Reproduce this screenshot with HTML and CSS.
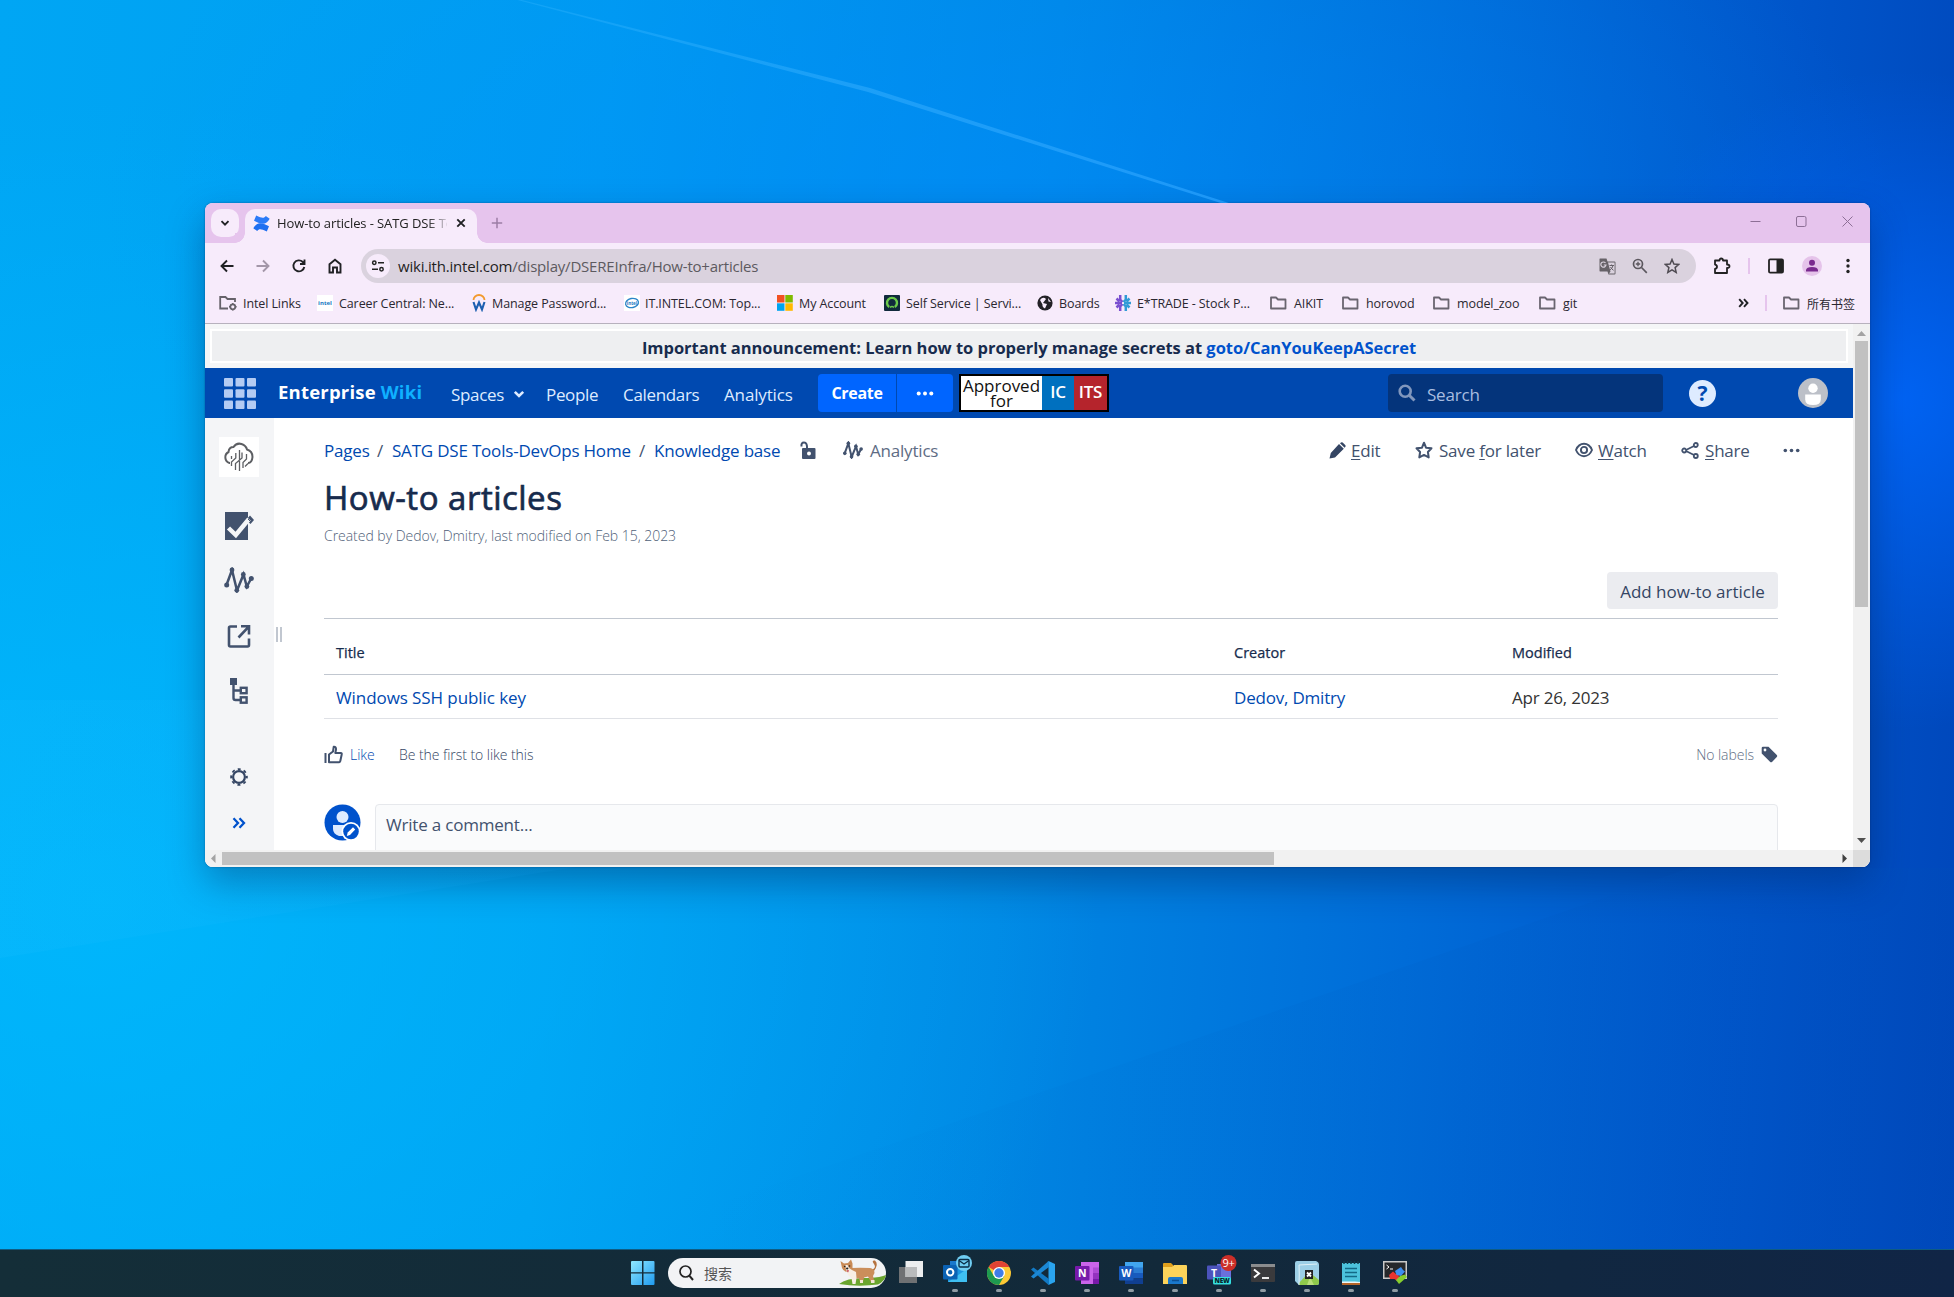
FILE: index.html
```html
<!DOCTYPE html>
<html lang="en">
<head>
<meta charset="utf-8">
<title>How-to articles - SATG DSE Tools-DevOps</title>
<link rel="stylesheet" href="styles.css">
</head>
<body>
<div class="desktop">
  <svg class="wallpaper" viewBox="0 0 1954 1249" preserveAspectRatio="none" aria-hidden="true">
    <defs>
      <linearGradient id="beam" x1="0" x2="1"><stop offset="0" stop-color="#39b8ff" stop-opacity=".3"/><stop offset=".5" stop-color="#39b0ff" stop-opacity=".5"/><stop offset="1" stop-color="#2aa2ff" stop-opacity=".7"/></linearGradient>
      <linearGradient id="shade" x1="0" x2="1"><stop offset="0" stop-color="#0060c0" stop-opacity="0"/><stop offset="1" stop-color="#0050b8" stop-opacity=".18"/></linearGradient>
      <linearGradient id="glow" x1="0" x2="1"><stop offset="0" stop-color="#20c0ff" stop-opacity=".16"/><stop offset="1" stop-color="#20a0ff" stop-opacity="0"/></linearGradient>
    </defs>
    <path d="M0 958 1000 800 1000 700 0 700Z" fill="url(#glow)"/>
    <path d="M700 1210 1690 868 1954 868 1954 1249 700 1249Z" fill="url(#shade)"/>
    <path d="M510 -2 514 -2 870 88 1232 204 1224 204 868 92Z" fill="url(#beam)"/>
  </svg>

  <main class="window">
    <header class="tabstrip">
      <button class="tab-search"><svg width="12" height="12" viewBox="0 0 12 12"><path d="M2.500 4.200 6 7.700 9.500 4.200" class="ink"/></svg></button>
      <div class="tab">
        <svg class="favicon" width="17" height="17" viewBox="0 0 17 17"><path d="M.3 13.300C4 6.800 8 7.200 16 11.200L13.800 16.500C8 13.700 6 13.500 4.200 16Z" fill="#1f6ff0"/><path d="M16.700 3.700C13 10.200 9 9.800 1 5.800L3.200.5C9 3.300 11 3.500 12.800 1Z" fill="#2b7bf8"/></svg>
        <span class="tab-title">How-to articles - SATG DSE To</span>
        <svg class="tab-close" width="10" height="10" viewBox="0 0 10 10"><path d="M1.300 1.300 8.700 8.700M8.700 1.300 1.300 8.700" class="ink"/></svg>
      </div>
      <svg class="tab-new" width="12" height="12" viewBox="0 0 12 12"><path d="M6 .8V11.200M.8 6H11.200" stroke="#9c7da5" stroke-width="1.500" fill="none"/></svg>
      <div class="win-controls">
        <svg width="11" height="11" viewBox="0 0 11 11"><path d="M.5 5.500H10.500"/></svg>
        <svg width="11" height="11" viewBox="0 0 11 11"><rect x=".5" y=".5" width="9.500" height="10" rx="1.500"/></svg>
        <svg width="11" height="11" viewBox="0 0 11 11"><path d="M.5.5 10.500 10.500M10.500.5.5 10.500"/></svg>
      </div>
    </header>

    <div class="toolbar">
      <svg width="16" height="16" viewBox="0 0 16 16" class="nav-ico ink"><path d="M14.500 8H3M8 2.500 2.500 8 8 13.500"/></svg>
      <svg width="16" height="16" viewBox="0 0 16 16" class="nav-ico ink faded"><path d="M1.500 8H13M8 2.500 13.500 8 8 13.500"/></svg>
      <svg width="16" height="16" viewBox="0 0 16 16" class="nav-ico ink"><path d="M13.300 9A5.500 5.500 0 1 1 11.800 4L13.300 5.500M13.500 1.500V6H9"/></svg>
      <svg width="16" height="16" viewBox="0 0 16 16" class="nav-ico ink"><path d="M2.500 6.300 8 1.800 13.500 6.300V14.500H10V9.500H6V14.500H2.500Z"/></svg>
      <div class="omnibox">
        <span class="site-info"><svg width="14" height="12" viewBox="0 0 14 12" fill="none" stroke="#222" stroke-width="1.500"><circle cx="3.300" cy="2.800" r="1.700"/><path d="M7 2.800H13M1 9.200H7"/><circle cx="10.500" cy="9.200" r="1.700"/></svg></span>
        <span class="url"><b>wiki.ith.intel.com</b>/display/DSEREInfra/How-to+articles</span>
        <svg width="17" height="17" viewBox="0 0 17 17"><path d="M1 .5H7.500L8.500 3.500H15.500Q16.500 3.500 16.500 4.500V15.500Q16.500 16.500 15.500 16.500H9.500L8.500 13.500H1Q.5 13.500.5 12.500V1Q.5.5 1 .5Z" fill="#666268"/><path d="M9 4.500H15.600V15.600H10L11.500 13.500Z" fill="#dad2de"/><path d="M6.500 5A2.600 2.600 0 1 0 7 7H4.800" stroke="#dad2de" stroke-width="1.200" fill="none"/><path d="M10.500 7.500H15M12.600 6.500V7.500M14 7.500Q13.500 10.500 10.800 12M11.500 9Q13 11.500 14.500 12.300" stroke="#666268" fill="none"/></svg>
        <svg width="16" height="16" viewBox="0 0 16 16" fill="none" stroke="#5b575e" stroke-width="1.700"><circle cx="6" cy="6" r="4.500"/><path d="M9.500 9.500 14.800 14.800"/><path d="M6 3.800V8.200M3.800 6H8.200" stroke-width="1.300"/></svg>
        <svg width="16" height="16" viewBox="0 0 16 16" fill="none" stroke="#4f4b52" stroke-width="1.500"><path d="M8 1.500 9.900 6 14.800 6.400 11.100 9.600 12.200 14.400 8 11.900 3.800 14.400 4.900 9.600 1.200 6.400 6.100 6Z"/></svg>
      </div>
      <svg class="t-puzzle" width="18" height="18" viewBox="0 0 18 18" fill="none" stroke="#222" stroke-width="1.800"><path d="M2 3.500H6.500Q6.500 1.500 8.200 1.500T10 3.500H14V7.500Q16.500 7.500 16.500 9.300T14 11V16H2V11.800Q4 11.500 4 9.700T2 7.600Z" stroke-linejoin="round"/></svg>
      <i class="bar t-bar1"></i>
      <svg class="t-panel" width="16" height="16" viewBox="0 0 16 16"><rect x="1" y="1.300" width="14" height="13.400" rx="1.200" fill="none" stroke="#222" stroke-width="1.800"/><path d="M8.500 1H15V15H8.500Z" fill="#222"/></svg>
      <svg class="t-user" width="20" height="20" viewBox="0 0 20 20"><circle cx="10" cy="10" r="10" fill="#e5c3ea"/><circle cx="10" cy="6.800" r="3" fill="#7a2a8f"/><path d="M4 15.500V14Q4.500 11 10 11T16 14V15.500Z" fill="#7a2a8f"/></svg>
      <svg class="t-more" width="4" height="16" viewBox="0 0 4 16" fill="#222"><circle cx="2" cy="2.500" r="1.700"/><circle cx="2" cy="8" r="1.700"/><circle cx="2" cy="13.500" r="1.700"/></svg>
    </div>

    <nav class="bookmarks">
      <svg width="18" height="16" viewBox="0 0 18 16" fill="none" stroke="#66626a" stroke-width="1.800"><path d="M9 13.500H1.200V2H6.500L8.500 4H16V7"/><circle cx="13.800" cy="11.800" r="2.500"/><path d="M13.800 8V9.300M13.800 14.300V15.600M10 11.800H11.300M16.300 11.800H17.600" stroke-width="1.500"/></svg><span>Intel Links</span>
      <svg width="16" height="16" viewBox="0 0 16 16"><path d="M0 0H16V16H0Z" fill="#fff"/><text x="8" y="10" class="mini-intel">intel</text></svg><span>Career Central: Ne...</span>
      <svg width="14" height="18" viewBox="0 0 14 18"><path d="M1.500 6A5.500 5 0 0 1 12.500 6" stroke="#f29a2e" stroke-width="1.800" fill="none"/><path d="M1.500 8 4 15.500 7 8.500 10 15.500 12.500 8" stroke="#1c5fb0" stroke-width="2.100" fill="none"/></svg><span>Manage Password...</span>
      <svg width="16" height="16" viewBox="0 0 16 16"><path d="M0 0H16V16H0Z" fill="#fff"/><ellipse cx="8" cy="8" rx="6.500" ry="4.600" fill="none" stroke="#2a86c8" stroke-width="1.300" transform="rotate(-12 8 8)"/><text x="8" y="10" class="mini-intel small">intel</text></svg><span>IT.INTEL.COM: Top...</span>
      <svg width="16" height="16" viewBox="0 0 16 16"><path d="M0 0H7.500V7.500H0Z" fill="#f25022"/><path d="M8.300 0H15.800V7.500H8.300Z" fill="#7fba00"/><path d="M0 8.300H7.500V15.800H0Z" fill="#00a4ef"/><path d="M8.300 8.300H15.800V15.800H8.300Z" fill="#ffb900"/></svg><span>My Account</span>
      <svg width="16" height="16" viewBox="0 0 16 16"><rect width="16" height="16" rx="1" fill="#10293c"/><path d="M5.200 12A5 5 0 1 1 10.800 12" stroke="#6cc94b" stroke-width="2.400" fill="none"/><path d="M6 12.500Q8 10.500 10 12.500" stroke="#6cc94b" stroke-width="1.500" fill="none"/></svg><span>Self Service | Servi...</span>
      <svg width="16" height="16" viewBox="0 0 16 16"><circle cx="8" cy="8" r="7.600" fill="#232126"/><path d="M3 5Q6 1 9 4L6 8 10 9 8 13.500Q5 12 5.500 9.500ZM11 3 14 7 11.500 6.500Z" fill="#f8ecfb"/></svg><span>Boards</span>
      <svg width="16" height="16" viewBox="0 0 16 16" fill="none" stroke-width="2.500"><path d="M5.200 0V4.500L7.500 7M0 8H7M5.200 16V11.500L7.500 9M1.500 3.500 4.500 6.500M1.500 12.500 4.500 9.500" stroke="#7a4fd0"/><path d="M10.800 0V4.500L8.500 7M16 8H9M10.800 16V11.500L8.500 9M14.500 3.500 11.500 6.500M14.500 12.500 11.500 9.500" stroke="#2f9bd6"/></svg><span>E*TRADE - Stock P...</span>
      <svg width="17" height="14" viewBox="0 0 17 14" class="folder"><path d="M1 1.500H6L8 3.500H15.500V12.500H1Z"/></svg><span>AIKIT</span>
      <svg width="17" height="14" viewBox="0 0 17 14" class="folder"><path d="M1 1.500H6L8 3.500H15.500V12.500H1Z"/></svg><span>horovod</span>
      <svg width="17" height="14" viewBox="0 0 17 14" class="folder"><path d="M1 1.500H6L8 3.500H15.500V12.500H1Z"/></svg><span>model_zoo</span>
      <svg width="17" height="14" viewBox="0 0 17 14" class="folder"><path d="M1 1.500H6L8 3.500H15.500V12.500H1Z"/></svg><span>git</span>
      <svg width="11" height="10" viewBox="0 0 11 10" class="ink"><path d="M1.200 1.200 4.700 5 1.200 8.800M6 1.200 9.500 5 6 8.800"/></svg>
      <i class="bar"></i>
      <svg width="17" height="14" viewBox="0 0 17 14" class="folder"><path d="M1 1.500H6L8 3.500H15.500V12.500H1Z"/></svg><span class="zh">所有书签</span>
    </nav>

    <div class="viewport">
      <div class="page">
        <div class="announce-wrap"><div class="announce">Important announcement: Learn how to properly manage secrets at <a>goto/CanYouKeepASecret</a></div></div>

        <div class="app-header">
          <svg class="h-grid" width="32" height="31" viewBox="0 0 32 31" fill="#b3cbf3"><rect width="9" height="8.500" rx="1"/><rect x="11.500" width="9" height="8.500" rx="1"/><rect x="23" width="9" height="8.500" rx="1"/><rect y="11.200" width="9" height="8.500" rx="1"/><rect x="11.500" y="11.200" width="9" height="8.500" rx="1"/><rect x="23" y="11.200" width="9" height="8.500" rx="1"/><rect y="22.400" width="9" height="8.500" rx="1"/><rect x="11.500" y="22.400" width="9" height="8.500" rx="1"/><rect x="23" y="22.400" width="9" height="8.500" rx="1"/></svg>
          <span class="brand">Enterprise <em>Wiki</em></span>
          <span class="menu spaces"><span>Spaces</span> <svg width="12" height="9" viewBox="0 0 12 9"><path d="M1.800 1.800 6 6 10.200 1.800" stroke="#deebff" stroke-width="2.600" fill="none"/></svg></span>
          <span class="menu people">People</span>
          <span class="menu cal">Calendars</span>
          <span class="menu ana">Analytics</span>
          <div class="create"><span class="create-main">Create</span><span class="create-more"><svg width="18" height="5" viewBox="0 0 18 5" fill="#fff"><circle cx="2.700" cy="2.500" r="2"/><circle cx="9" cy="2.500" r="2"/><circle cx="15.300" cy="2.500" r="2"/></svg></span></div>
          <div class="approved"><span class="ap-text"><span>Approved</span><span>for</span></span><span class="ap-ic">IC</span><span class="ap-its">ITS</span></div>
          <div class="search"><svg width="18" height="18" viewBox="0 0 18 18" fill="none" stroke="#8197bd"><circle cx="7.200" cy="7.200" r="5.500" stroke-width="2.600"/><path d="M11.200 11.200 16.500 16.500" stroke-width="3"/></svg><span>Search</span></div>
          <span class="help">?</span>
          <svg class="me" width="30" height="30" viewBox="0 0 30 30"><circle cx="15" cy="15" r="15" fill="#bcc0c8"/><circle cx="15" cy="10.300" r="4.700" fill="#fff"/><path d="M7.200 16.500H22.800V21.500Q22.800 27 15 27T7.200 21.500Z" fill="#fff"/></svg>
        </div>

        <div class="columns">
          <aside class="sidebar">
            <span class="space-logo"><svg width="34" height="34" viewBox="0 0 34 34" fill="none" stroke="#5d5f63"><path d="M8 23H7.500A6 6 0 0 1 6.500 12Q7 7 11.500 7 14.500 2.500 19.500 4 24 5.500 25 9.500 30.500 11 30.500 17 30 23 26 23" stroke-width="2"/><path d="M17.500 10V31M13.800 13V18L9.500 22V26M13.500 30V23.500L20 18V12.500M21 28V22.500L24.500 19V14M23 26.500 26 23.500M9.500 19V16" stroke-width="1.300"/></svg></span>
            <svg class="s1" width="30" height="29" viewBox="0 0 30 29"><path d="M1 1H24V29H1Z" fill="#42526e"/><path d="M26 4.500 30 9 26.500 13 22 9Z" fill="#42526e"/><path d="M4.500 17 11.800 24 25 8" stroke="#f4f5f7" stroke-width="4.500" fill="none"/><path d="M24 8 27 11" stroke="#42526e" stroke-width="1"/></svg>
            <svg class="s2" width="30" height="26" viewBox="0 0 30 26"><path d="M2.500 18 8 3 13 23.500 19.500 7.500 22.800 19.500 27.500 11" stroke="#42526e" stroke-width="2.500" fill="none"/><g fill="#42526e"><circle cx="2.700" cy="18" r="2.500"/><circle cx="8" cy="3" r="2.400"/><circle cx="12.800" cy="23.300" r="2.400"/><circle cx="19.300" cy="7.500" r="2.400"/><circle cx="22.900" cy="19.500" r="2.400"/><circle cx="27.300" cy="11.500" r="2.500"/></g></svg>
            <svg class="s3" width="24" height="24" viewBox="0 0 24 24" fill="none" stroke="#42526e" stroke-width="2.600"><path d="M10 2.500H3.500Q2 2.500 2 4V21Q2 22.500 3.500 22.500H20.500Q22 22.500 22 21V14.500"/><path d="M14 2.300H22V10.500M22 2.300 11.500 13.500"/></svg>
            <svg class="s4" width="20" height="27" viewBox="0 0 20 27" fill="none" stroke="#42526e" stroke-width="2.400"><path d="M1 1H8V8H1Z" fill="#42526e" stroke="none"/><path d="M4.500 8V21Q4.500 23 6.500 23H11M4.500 13.500H11"/><rect x="11.800" y="10.800" width="5.800" height="5.400"/><rect x="11.800" y="20.300" width="5.800" height="5.400"/></svg>
            <svg class="s5" width="18" height="18" viewBox="0 0 18 18" fill="none" stroke="#344563"><circle cx="9" cy="9" r="5.900" stroke-width="2.200"/><circle cx="9" cy="9" r="7.900" stroke-width="1.800" stroke-dasharray="3 3.200" stroke-dashoffset="1.500"/></svg>
            <svg class="s6" width="14" height="12" viewBox="0 0 14 12"><path d="M1.500 1.200 6 6 1.500 10.800M7.500 1.200 12 6 7.500 10.800" stroke="#0052cc" stroke-width="2.300" fill="none"/></svg>
          </aside>
          <div class="handle"><i></i><i></i></div>

          <section class="content">
            <div class="crumb-row">
              <div class="crumbs">
                <a>Pages</a><span>/</span><a>SATG DSE Tools-DevOps Home</a><span>/</span><a>Knowledge base</a>
                <svg width="17" height="19" viewBox="0 0 17 19"><path d="M1.500 5.500Q1 1.500 4 1.500 7.500 1.500 7 8" stroke="#42526e" stroke-width="2" fill="none"/><rect x="2" y="7" width="13.500" height="11" rx="1" fill="#42526e"/><circle cx="9" cy="12.500" r="2" fill="#fff"/></svg>
                <svg width="20" height="18" viewBox="0 0 30 26"><path d="M2.500 18 8 3 13 23.500 19.500 7.500 22.800 19.500 27.500 11" stroke="#42526e" stroke-width="3" fill="none"/><g fill="#42526e"><circle cx="2.700" cy="18" r="2.700"/><circle cx="8" cy="3" r="2.700"/><circle cx="12.800" cy="23" r="2.700"/><circle cx="19.300" cy="7.500" r="2.700"/><circle cx="22.900" cy="19.500" r="2.700"/><circle cx="27.200" cy="11.500" r="2.700"/></g></svg>
                <span class="grey">Analytics</span>
              </div>
              <div class="actions">
                <svg width="17" height="17" viewBox="0 0 17 17" fill="#344563"><path d="M.5 16.500 1.800 11 10 2 14.800 6.800 6 15.500ZM11 1.200 12 .4Q13 0 13.700.6L16.400 3.200Q17 4 16.400 4.700L15.600 5.700Z"/></svg><span><u>E</u>dit</span>
                <svg width="18" height="18" viewBox="0 0 18 18" fill="none" stroke="#42526e" stroke-width="2" stroke-linejoin="round"><path d="M9 1.700 11 6.700 16.500 7.200 12.900 11 13.700 16.400 9 13.900 4.300 16.400 5.100 11 1.500 7.200 7 6.700Z"/></svg><span>Save <u>f</u>or later</span>
                <svg width="18" height="16" viewBox="0 0 18 16" fill="none" stroke="#42526e" stroke-width="1.900"><path d="M1 8Q3.500 1.800 9 1.800T17 8Q14.500 14.200 9 14.200T1 8Z"/><circle cx="9" cy="8" r="3.100"/></svg><span><u>W</u>atch</span>
                <svg width="18" height="17" viewBox="0 0 18 17" fill="none" stroke="#42526e" stroke-width="1.800"><path d="M4 8.500 14 3.500M4 8.500 14 13.500"/><g fill="#fff"><circle cx="3.200" cy="8.500" r="2"/><circle cx="14.800" cy="3" r="2"/><circle cx="14.800" cy="14" r="2"/></g></svg><span><u>S</u>hare</span>
                <svg width="17" height="5" viewBox="0 0 17 5" fill="#42526e"><circle cx="2.300" cy="2.500" r="1.800"/><circle cx="8.500" cy="2.500" r="1.800"/><circle cx="14.700" cy="2.500" r="1.800"/></svg>
              </div>
            </div>
            <h1>How-to articles</h1>
            <p class="meta">Created by Dedov, Dmitry, last modified on Feb 15, 2023</p>
            <div class="button-row"><span class="button">Add how-to article</span></div>
            <div class="table">
              <div class="tr th"><span>Title</span><span>Creator</span><span>Modified</span></div>
              <div class="tr"><a class="article">Windows SSH public key</a><a>Dedov, Dmitry</a><span>Apr 26, 2023</span></div>
            </div>
            <div class="like-row">
              <svg width="19" height="19" viewBox="0 0 19 19" fill="none" stroke="#42526e" stroke-width="2"><path d="M1.500 8V18"/><path d="M5 17.300V9.500L9 6.500 9.700 1.800Q12.300 1.500 12 4.500L11.300 8H16.800Q18 8 17.700 9.500L16.300 16Q16 17.300 14.800 17.300Z" stroke-linejoin="round"/></svg>
              <a class="like">Like</a><span>Be the first to like this</span>
              <span class="nolabels">No labels</span>
              <svg width="17" height="17" viewBox="0 0 17 17"><path d="M.7 2Q.7.7 2 .7H7.500L15.800 9Q16.800 10 15.800 11L11 15.900Q10 16.800 9 15.800L.7 7.500Z" fill="#42526e"/><circle cx="4" cy="4" r="1.400" fill="#fff"/></svg>
            </div>
            <div class="comment">
              <svg width="37" height="37" viewBox="0 0 37 37"><circle cx="18.500" cy="18.500" r="18" fill="#0052cc"/><circle cx="18.500" cy="13" r="6" fill="#deebff"/><path d="M9 21H27V32H15Q9 30 9 25Z" fill="#deebff"/><circle cx="27" cy="27.500" r="9.500" fill="#fff"/><circle cx="27" cy="27.500" r="7.800" fill="#0052cc"/><path d="M22.800 32 23.700 28.500 29 23.300 31.200 25.500 26 31Z" fill="#fff"/></svg>
              <div class="comment-box">Write a comment...</div>
            </div>
          </section>
        </div>
      </div>
      <div class="vbar"><svg width="9" height="6" viewBox="0 0 9 6"><path d="M0 5 4.500 0 9 5Z" fill="#a3a3a3"/></svg><i></i><svg width="9" height="6" viewBox="0 0 9 6"><path d="M0 0H9L4.500 5Z" fill="#505050"/></svg></div>
      <div class="hbar"><svg width="5" height="9" viewBox="0 0 5 9"><path d="M4.500 0V9L0 4.500Z" fill="#a3a3a3"/></svg><i></i><svg width="5" height="9" viewBox="0 0 5 9"><path d="M.5 0V9L5 4.500Z" fill="#404040"/></svg></div>
      <div class="corner"></div>
    </div>
  </main>

  <footer class="taskbar">
    <svg class="app" width="24" height="24" viewBox="0 0 24 24"><defs><linearGradient id="win" x2="1" y2="1"><stop stop-color="#8fe8ff"/><stop offset="1" stop-color="#1f9bf0"/></linearGradient></defs><path d="M0 1Q0 0 1 0H11V11.300H0ZM12.500 0H22.500Q23.500 0 23.500 1V11.300H12.500ZM0 12.500H11V24H1Q0 24 0 23ZM12.500 12.500H23.500V23Q23.500 24 22.500 24H12.500Z" fill="url(#win)"/></svg>
    <div class="pill">
      <svg width="15" height="16" viewBox="0 0 15 16" fill="none" stroke="#222" stroke-width="1.700"><circle cx="6.500" cy="6.500" r="5.500"/><path d="M10.500 10.800 14 15" stroke-width="2"/></svg>
      <span class="zh">搜索</span>
      <svg width="48" height="28" viewBox="0 0 48 28"><path d="M1 25Q8 19 26 19 38 19 45 17L48 16Q47 22 40 25.500 20 28 1 25Z" fill="#6aa52e"/><path d="M33 11Q39 9 36 5 33 1 37 1.500 41 5 36 12Z" fill="#b5733f"/><path d="M13 9Q22 8.500 32 9 36.500 10 36.500 14L35 17 36.500 23H33L30 17.500 26 18.500 25 23H22L21 19 17 20Q11 18 11 13Z" fill="#cb8e5b"/><path d="M2.500 2 6 4.500 10 4 13 .5 14.500 4.500 14.500 9Q15 13 10.500 13.500 5 12.500 4 9Z" fill="#c98a55"/><path d="M7.500 6 9.500 6 11 9 14 11 18 13 18.500 19 17.500 25H14.500L13.500 19 10 16 8 11Z" fill="#f8eee4"/><path d="M33 21H36.500V24H33ZM22 21H25V24H22Z" fill="#f3e4d4"/><circle cx="6.700" cy="7.500" r=".8" fill="#222"/><circle cx="11.500" cy="7" r=".8" fill="#222"/><ellipse cx="9.200" cy="9.500" rx="1.200" ry=".9" fill="#222"/><path d="M8.300 11.300H11L10 13.500Z" fill="#c0394a"/></svg>
    </div>
    <svg class="app" width="24" height="24" viewBox="0 0 24 24"><path d="M0 6H18V22H0Z" fill="#6f7173"/><path d="M6.500 0H24V16H6.500Z" fill="#eceeef"/><path d="M6.500 6H18V16H6.500Z" fill="#b9bbbc"/></svg>
    <span class="app run"><svg width="30" height="30" viewBox="0 0 30 30"><path d="M7 6H19V16H7Z" fill="#1a78cc"/><path d="M5 13 24 14V27H5Z" fill="#1e96e0"/><path d="M5 27 24 14V27Z" fill="#3fc0f2"/><rect y="10" width="14.500" height="14.500" rx="1" fill="#0b62b4"/><circle cx="7.200" cy="17.200" r="3.200" fill="none" stroke="#fff" stroke-width="2"/><circle cx="21" cy="8" r="8" fill="#6fcdf2"/><rect x="16" y="4.500" width="10" height="7.500" rx="1" fill="none" stroke="#0a2d46" stroke-width="1.400"/><path d="M16 5.500 21 9 26 5.500" fill="none" stroke="#0a2d46" stroke-width="1.400"/></svg></span>
    <span class="app run"><svg width="24" height="24" viewBox="0 0 24 24"><circle cx="12" cy="12" r="12" fill="#fcc934"/><path d="M12 12 1.600 6A12 12 0 0 1 22.400 6H12Z" fill="#e04334"/><path d="M1.600 6A12 12 0 0 0 12 24L17.200 15 12 12 6.800 15Z" fill="#1e9a50"/><circle cx="12" cy="12" r="6" fill="#fff"/><circle cx="12" cy="12" r="4.700" fill="#3f7de8"/></svg></span>
    <span class="app run"><svg width="24" height="24" viewBox="0 0 24 24"><path d="M17.500 0 24 3V21L17.500 24Z" fill="#2aa4ef"/><path d="M0 8.500 2.500 6.500 18 18V24L17 23.500Z" fill="#1279c4"/><path d="M0 15.500 2.500 17.500 18 6V0L17 .5Z" fill="#1b87d4"/></svg></span>
    <span class="app run"><svg width="24" height="24" viewBox="0 0 24 24"><path d="M6 1H24V23H6Z" fill="#ca64ea"/><path d="M18 6.500H24V12H18Z" fill="#ae4bd5"/><path d="M18 12H24V17.500H18Z" fill="#9332bf"/><path d="M18 17.500H24V23H18Z" fill="#7719aa"/><rect y="5" width="14.500" height="14.500" rx="1" fill="#7719aa"/><text x="7.200" y="16.200" class="office">N</text></svg></span>
    <span class="app run"><svg width="24" height="24" viewBox="0 0 24 24"><path d="M6 1H24V7H6Z" fill="#41a5ee"/><path d="M6 6.500H24V12H6Z" fill="#2b7cd3"/><path d="M6 12H24V17.500H6Z" fill="#185abd"/><path d="M6 17.500H24V23H6Z" fill="#103f91"/><rect y="5" width="14.500" height="14.500" rx="1" fill="#185abd"/><text x="7.200" y="16.200" class="office">W</text></svg></span>
    <span class="app run"><svg width="24" height="24" viewBox="0 0 24 24"><path d="M0 3Q0 2 1 2H8L10 4V9H0Z" fill="#e0a01c"/><path d="M0 6H9L11 4H23Q24 4 24 5V23H0Z" fill="#fcd35a"/><path d="M5 23V18Q5 16 7 16H18Q20 16 20 18V23Z" fill="#1a78cc"/><path d="M9 19.500H16" stroke="#0b4f94" stroke-width="1.500"/></svg></span>
    <span class="app run"><svg width="30" height="30" viewBox="0 0 30 30"><path d="M10 9H24V24H10Z" fill="#6a70dd"/><rect y="10.500" width="14" height="14" rx="1" fill="#4b53bc"/><text x="7" y="21.500" class="office">T</text><rect x="6" y="22" width="18" height="7.500" rx="1.500" fill="#35dfe0"/><text x="15" y="28.200" class="new">NEW</text><circle cx="21.500" cy="8" r="8" fill="#cc2f29"/><text x="21.500" y="11.800" class="badge">9+</text></svg></span>
    <span class="app run"><svg width="24" height="24" viewBox="0 0 24 24"><rect y="3" width="24" height="18" rx="1" fill="#3a3a3c"/><path d="M0 3H24V6H0Z" fill="#8a8c8e"/><path d="M3 8.500 8 12.500 3 16.500" stroke="#fff" stroke-width="2" fill="none"/><path d="M11 17H18" stroke="#fff" stroke-width="1.800"/></svg></span>
    <span class="app run"><svg width="24" height="24" viewBox="0 0 24 24"><path d="M0 2Q0 0 2 0H21Q24 1 24 4V22Q24 24 22 24H4L0 20Z" fill="#9ccfe6"/><path d="M4 24V22L14 11 24 19V22Q24 24 22 24Z" fill="#8fc94c"/><path d="M4 24Q4.500 12 4 4L22 3" stroke="#e1f1f7" stroke-width="1" fill="none"/><path d="M12 24 15 16 19 24Z" fill="#b8de7a"/><path d="M10 9H18V18H10Z" fill="#222"/><path d="M12 11.500 16 15.500M16 11.500 12 15.500" stroke="#fff" stroke-width="1.800"/></svg></span>
    <span class="app run mid"><svg width="20" height="24" viewBox="0 0 20 24"><path d="M1 2H19V21H1Z" fill="#4cc3dc"/><path d="M1 21H19V24H1Z" fill="#b5652a"/><path d="M1 20.500H14L19 21V22H1Z" fill="#e9f5f8"/><path d="M3 0V3M6.500 0V3M10 0V3M13.500 0V3M17 0V3" stroke="#0f3a4a" stroke-width="1.500"/><path d="M4 7.500H16M4 11.500H16M4 15.500H16" stroke="#136a86" stroke-width="1.600"/></svg></span>
    <span class="app run"><svg width="24" height="24" viewBox="0 0 24 24"><path d="M0 0H24V18H0Z" fill="#c9c9c9"/><path d="M1.500 1.500H22.500V16.500H1.500Z" fill="#26282b"/><path d="M3.500 4 6 6 3.500 8M7 8H10" stroke="#fff" fill="none"/><path d="M6 14 10 10.500 13 13 15 12.500 16.500 18 14 20 11.500 18 7 18Z" fill="#e8342f"/><path d="M12 10 18 6 20 9 22 10.500 18 15 13.500 14Z" fill="#3d8ff0"/><path d="M13 19 17 15 22 13.500 24 16 16 23Z" fill="#86cf2e"/></svg></span>
  </footer>
</div>
</body>
</html>
```
FILE: styles.css
```css
* { box-sizing: border-box; }
html, body { margin: 0; height: 100%; }
body { font-family: "Open Sans", "Noto Sans", "Noto Sans CJK SC", sans-serif; font-size: 17px; letter-spacing: -.2px; color: #172b4d; overflow: hidden; }
svg { display: block; flex: none; }
a { color: #0049b0; text-decoration: none; }
button { border: 0; padding: 0; }
.zh { font-family: "Noto Sans CJK SC", sans-serif; }

.desktop {
  position: relative; display: flex; flex-direction: column; width: 1954px; height: 1297px;
  background:
    radial-gradient(ellipse 330px 330px at 1900px 400px, rgba(0,104,255,.8), rgba(0,100,250,0)),
    radial-gradient(ellipse 900px 420px at 1000px 200px, rgba(0,140,255,.5), rgba(0,140,255,0)),
    radial-gradient(ellipse 1000px 800px at 100px 900px, rgba(0,190,255,.7), rgba(0,190,255,0)),
    linear-gradient(94deg, #00a6f4 0%, #009cf0 30%, #0088e4 52%, #006cd8 72%, #0055ca 88%, #0046ba 100%);
}
.desktop::before { content: ""; position: absolute; left: 205px; top: 203px; width: 1665px; height: 664px; border-radius: 8px; box-shadow: 0 0 2px rgba(0,30,80,.5), 0 16px 36px rgba(0,30,80,.38); }
.wallpaper { position: absolute; left: 0; top: 0; width: 1954px; height: 1249px; }

.window {
  position: relative; display: flex; flex-direction: column; width: 1665px; height: 664px; margin: 203px 0 0 205px;
  background: #f7ebfb; border-radius: 8px; overflow: hidden;
}
.ink { fill: none; stroke: #202124; stroke-width: 1.9; }
.faded { stroke: #a396a8; }

.tabstrip { display: flex; height: 40px; background: #e6c4ed; }
.tab-search { display: flex; align-items: center; justify-content: center; width: 28px; height: 28px; margin: 6px 6px 0; border-radius: 10px; background: #f7ebfb; }
.tab { position: relative; display: flex; align-items: center; width: 232px; height: 34px; margin-top: 6px; padding: 0 11px 6px 8px; border-radius: 10px 10px 0 0; background: #f7ebfb; }
.tab::before, .tab::after { content: ""; position: absolute; bottom: 0; width: 10px; height: 10px; }
.tab::before { left: -10px; background: radial-gradient(circle at 0 0, #e6c4ed 9.5px, #f7ebfb 10px); }
.tab::after { right: -10px; background: radial-gradient(circle at 100% 0, #e6c4ed 9.5px, #f7ebfb 10px); }
.tab-title { width: 170px; margin-left: 7px; font-size: 13px; letter-spacing: -.1px; color: #222; white-space: nowrap; overflow: hidden; -webkit-mask-image: linear-gradient(90deg, #000 150px, transparent 174px); }
.tab-close { margin-left: auto; }
.tab-new { margin: 14px 0 0 14px; }
.win-controls { display: flex; gap: 35px; margin: 13px 17px 0 auto; }
.win-controls svg { fill: none; stroke: #8d6f96; stroke-width: 1; }

.toolbar { display: flex; align-items: center; height: 46px; padding-left: 14px; }
.nav-ico { margin-right: 20px; }
.omnibox { display: flex; align-items: center; width: 1335px; height: 34px; margin-left: -2px; padding: 0 16px 0 5px; border-radius: 17px; background: #dad2de; }
.omnibox > svg { margin-left: 16px; }
.site-info { display: flex; align-items: center; justify-content: center; width: 24px; height: 24px; border-radius: 50%; background: #f7ebfb; }
.url { flex: 1; margin-left: 8px; padding-bottom: 1px; font-size: 15px; color: #5d5a60; white-space: nowrap; }
.url b { font-weight: 400; color: #1f1f1f; }
.bar { width: 2px; height: 16px; background: #e6c4ed; }
.t-puzzle { margin-left: 17px; }
.t-bar1 { margin-left: 17px; }
.t-panel { margin-left: 18px; }
.t-user { margin-left: 18px; }
.t-more { margin-left: 24px; }

.bookmarks {
  display: grid; align-items: center; height: 34px; padding: 0 0 6px 14px; font-size: 12.5px; letter-spacing: -.1px; color: #2a2730; white-space: nowrap;
  grid-template-columns: 24px 74px 22px 133px 20px 132px 21px 132px 22px 85px 22px 131px 22px 56px 22px 133px 24px 48px 24px 67px 24px 82px 24px 175px 27px 18px 24px 56px;
}
.bookmarks .zh { font-size: 12px; letter-spacing: 0; }
.folder { fill: none; stroke: #6a6570; stroke-width: 1.8; stroke-linejoin: round; }
.mini-intel { font: bold 6px "Open Sans", sans-serif; fill: #1a78c2; text-anchor: middle; letter-spacing: 0; }
.mini-intel.small { font-size: 4.5px; }

.viewport { display: grid; grid-template-columns: 1648px 17px; grid-template-rows: 526px 17px; height: 544px; border-top: 1px solid #b7b1bd; background: #f4f5f7; }
.page { overflow: hidden; background: #fff; }
.announce-wrap { height: 44px; padding: 5px; background: #f5f6f7; }
.announce { width: 1638px; height: 34px; border: 2px solid #fff; background: #eeeff1; text-align: center; font-weight: 700; font-size: 16.5px; letter-spacing: -.03px; line-height: 34px; color: #172b4d; white-space: nowrap; }
.announce a { color: #0052cc; }

.app-header { display: flex; align-items: center; height: 50px; padding-left: 19px; background: #0049b0; color: #deebff; white-space: nowrap; }
.h-grid { margin-right: 22px; }
.brand { width: 172px; font-weight: 700; font-size: 18.5px; letter-spacing: .2px; line-height: 24px; padding-bottom: 2px; color: #fff; }
.brand em { font-style: normal; color: #0fb0ff; }
.menu { padding-top: 2px; letter-spacing: -.33px; }
.spaces { display: flex; align-items: center; gap: 9px; width: 96px; padding-left: 1px; }
.people { width: 77px; }
.cal { width: 101px; }
.ana { width: 94px; letter-spacing: -.15px; }
.create { display: flex; width: 135px; height: 38px; border-radius: 4px; background: #0065ff; color: #fff; font-weight: 700; font-size: 16px; letter-spacing: -.3px; }
.create-main { width: 79px; border-right: 1px solid #0049b0; text-align: center; line-height: 39px; }
.create-more { display: flex; flex: 1; align-items: center; justify-content: center; }
.approved { display: flex; width: 150px; height: 38px; margin-left: 6px; border: 2px solid #000; background: #fff; color: #fff; }
.ap-text { display: flex; flex-direction: column; align-items: center; width: 81px; color: #111; font-size: 17px; letter-spacing: 0; line-height: 15px; padding-top: 2px; }
.ap-ic, .ap-its { width: 32px; background: #0070bf; text-align: center; line-height: 32px; font-weight: 600; font-size: 17px; }
.ap-its { width: 33px; background: #b5242c; }
.search { display: flex; align-items: center; gap: 11px; width: 275px; height: 38px; margin-left: 279px; padding-left: 10px; border-radius: 4px; background: #04347b; color: #a9bde0; }
.search span { padding-top: 2px; }
.help { width: 27px; height: 27px; margin-left: 26px; border-radius: 50%; background: #deebff; color: #0049b0; font-weight: 700; font-size: 21px; line-height: 27px; text-align: center; }
.me { margin-left: 82px; }

.columns { display: flex; height: 432px; }
.sidebar { display: flex; flex-direction: column; align-items: center; width: 69px; padding: 19px 1px 0 0; background: #f4f5f7; }
.space-logo { display: flex; align-items: center; justify-content: center; width: 40px; height: 40px; background: #fff; }
.s1 { margin-top: 34px; }
.s2 { margin-top: 27px; }
.s3 { margin-top: 31px; }
.s4 { margin-top: 29px; }
.s5 { margin-top: 64px; }
.s6 { margin-top: 31px; }
.handle { display: flex; gap: 2px; width: 10px; padding: 209px 0 0 2px; }
.handle i { width: 2px; height: 15px; background: #c1c7d0; }
.content { flex: 1; padding-left: 40px; }
.crumb-row { display: flex; height: 66px; align-items: center; padding-bottom: 2px; }
.crumbs { display: grid; align-items: center; grid-template-columns: 53px 15px 247px 15px 146px 43px 27px 459px; width: 1005px; color: #42526e; white-space: nowrap; }
.grey { color: #5e6c84; }
.actions { display: grid; align-items: center; grid-template-columns: 22px 64px 24px 136px 23px 83px 24px 78px 20px; color: #42526e; white-space: nowrap; }
u { text-underline-offset: 2px; text-decoration-thickness: 1px; }
h1 { margin: 0; height: 30px; font-size: 33px; font-weight: 400; -webkit-text-stroke: .7px #172b4d; letter-spacing: .5px; line-height: 28px; color: #172b4d; white-space: nowrap; }
.meta { margin: 12px 0 0; font-size: 14px; letter-spacing: -.03px; line-height: 20px; font-weight: 300; color: #505f79; }
.button-row { display: flex; justify-content: flex-end; width: 1454px; padding-top: 26px; }
.button { width: 171px; height: 37px; border-radius: 4px; background: #ebecf0; color: #344563; letter-spacing: 0; text-align: center; line-height: 39px; }
.table { width: 1454px; margin-top: 9px; border-top: 1px solid #c1c7d0; }
.tr { display: grid; align-items: center; grid-template-columns: 898px 278px auto; height: 44px; padding: 1px 0 0 12px; border-bottom: 1px solid #dfe1e6; color: #333; }
.article { letter-spacing: -.08px; }
.th { height: 56px; padding-top: 11px; border-bottom-color: #c1c7d0; font-size: 14.5px; letter-spacing: 0; -webkit-text-stroke: .25px #172b4d; color: #172b4d; }
.like-row { display: flex; align-items: center; width: 1454px; height: 20px; margin-top: 25px; font-size: 14px; letter-spacing: -.05px; font-weight: 300; color: #344563; }
.like { width: 49px; margin-left: 7px; }
.nolabels { margin: 0 7px 0 auto; color: #5e6c84; }
.comment { display: flex; gap: 14px; margin-top: 40px; }
.comment-box { width: 1403px; height: 80px; padding: 8px 10px; border: 1px solid #e6e8ec; border-radius: 4px; background: #fafbfc; color: #42526e; }

.vbar { display: flex; flex-direction: column; align-items: center; padding: 7px 2px 0; background: #f1f1f1; }
.vbar i { width: 13px; height: 266px; margin: 4px 0 231px; background: #c1c1c1; }
.hbar { display: flex; align-items: center; padding-left: 6px; background: #f1f1f1; }
.hbar i { width: 1052px; height: 13px; margin: 0 568px 0 6px; background: #c1c1c1; }
.corner { background: #dcdcdc; }

.taskbar { position: relative; display: flex; align-items: flex-start; height: 48px; margin-top: auto; padding: 11px 0 0 631px; border-top: 1px solid #0f5c83; background: linear-gradient(90deg, #142e38, #12293a 60%, #102546); }
.pill { display: flex; align-items: center; width: 218px; height: 30px; margin: -3px 13px 0 -7px; padding-left: 11px; border-radius: 15px; background: #f2f3f5; }
.pill span { flex: 1; margin-left: 10px; font-size: 14px; letter-spacing: 0; color: #555; }
.app { display: flex; align-items: flex-end; width: 24px; height: 24px; margin-right: 20px; }
.mid { justify-content: center; }
.run { position: relative; }
.run::after { content: ""; position: absolute; left: 9px; bottom: -7px; width: 6px; height: 3px; border-radius: 2px; background: #8f9ba3; }
.office { font: bold 10.5px "Open Sans", sans-serif; fill: #fff; text-anchor: middle; }
.new { font: 800 6.5px "Open Sans", sans-serif; fill: #06262c; text-anchor: middle; }
.badge { font: 11px "Open Sans", sans-serif; fill: #fff; text-anchor: middle; }
```
